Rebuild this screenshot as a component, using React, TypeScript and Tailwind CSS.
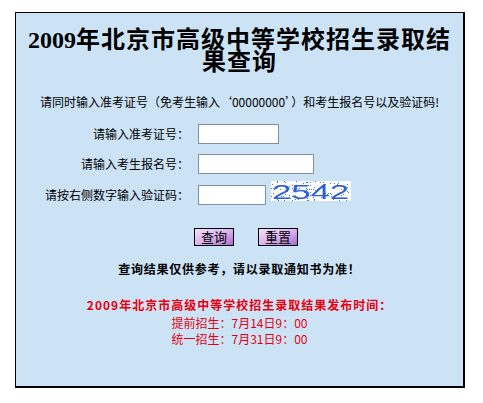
import React from 'react'

// 验证码噪点 (固定种子，保证每次渲染一致)
const noise = (() => {
  const dots: { x: number; y: number }[] = []
  let seed = 7
  const rand = () => {
    seed = (seed * 9301 + 49297) % 233280
    return seed / 233280
  }
  for (let i = 0; i < 110; i++) {
    dots.push({ x: Math.floor(rand() * 80), y: Math.floor(rand() * 20) })
  }
  return dots
})()

function Captcha() {
  return (
    <svg width="80" height="20" viewBox="0 0 80 20" className="block">
      <rect width="80" height="20" fill="#ffffff" />
      {noise.map((d, i) => (
        <rect key={i} x={d.x} y={d.y} width="1" height="1" fill="#4a74dc" />
      ))}
      <text
        x="1"
        y="17.5"
        fontSize="21"
        fontFamily="Liberation Sans, sans-serif"
        textLength="77"
        lengthAdjust="spacingAndGlyphs"
        fill="#2b5fd9"
      >
        2542
      </text>
    </svg>
  )
}

const fields = [
  { id: 'zkzh', label: '请输入准考证号：', width: 'w-[81px]' },
  { id: 'bmh', label: '请输入考生报名号：', width: 'w-[116px]' },
]

export default function App() {
  return (
    <div className="min-h-[403px] bg-white pt-[12px] pl-[15px] font-['Noto_Sans_CJK_SC','Liberation_Sans',sans-serif] text-black">
      <div className="w-[450px] h-[376px] border-t border-l border-r-2 border-b-2 border-black bg-[#cce3f6]">
        {/* 标题 */}
        <h1 className="px-[4px] pt-[15px] text-center text-[24px] leading-[20px] font-bold tracking-[1px]">
          <span className="font-['Liberation_Serif',serif] tracking-normal">2009</span>年北京市高级中等学校招生录取结果查询
        </h1>

        <p className="mt-[24px] text-center text-[12px] leading-[16px]">
          请同时输入准考证号（免考生输入‘00000000’）和考生报名号以及验证码!
        </p>

        {/* 表单 */}
        <div className="mt-[14px] flex flex-col text-[12px]">
          {fields.map((f, i) => (
            <div key={f.id} className={`flex items-center h-[20px] ${i > 0 ? 'mt-[10px]' : ''}`}>
              <label htmlFor={f.id} className="w-[173px] text-right leading-[20px]">
                {f.label}
              </label>
              <input
                id={f.id}
                type="text"
                className={`ml-[9px] h-[20px] ${f.width} border border-[#7f8fa6] bg-white outline-none`}
              />
            </div>
          ))}
          <div className="mt-[7px] flex items-start">
            <label htmlFor="yzm" className="mt-[4px] w-[173px] text-right leading-[20px]">
              请按右侧数字输入验证码：
            </label>
            <input
              id="yzm"
              type="text"
              className="mt-[4px] ml-[9px] h-[20px] w-[68px] border border-[#7f8fa6] bg-white outline-none"
            />
            <div className="ml-[5px]">
              <Captcha />
            </div>
          </div>
        </div>

        {/* 按钮 */}
        <div className="mt-[23px] flex gap-[24px] pl-[178px]">
          <button className="w-[40px] h-[18px] border border-black bg-gradient-to-br from-[#f4defb] via-[#dcb4ef] to-[#a86cc8] text-[13px] leading-[16px]">
            查询
          </button>
          <button className="w-[40px] h-[18px] border border-black bg-gradient-to-br from-[#f4defb] via-[#dcb4ef] to-[#a86cc8] text-[13px] leading-[16px]">
            重置
          </button>
        </div>

        <p className="mt-[15px] text-center text-[12px] leading-[16px] font-bold tracking-[0.75px]">
          查询结果仅供参考，请以录取通知书为准！
        </p>

        {/* 发布时间 */}
        <div className="mt-[19px] text-center text-[12px] text-[#e60010]">
          <p className="leading-[17px] font-bold tracking-[1px]">
            2009年北京市高级中等学校招生录取结果发布时间：
          </p>
          <p className="mt-[2px] leading-[16px]">提前招生：7月14日9：00</p>
          <p className="leading-[16px]">统一招生：7月31日9：00</p>
        </div>
      </div>
    </div>
  )
}
